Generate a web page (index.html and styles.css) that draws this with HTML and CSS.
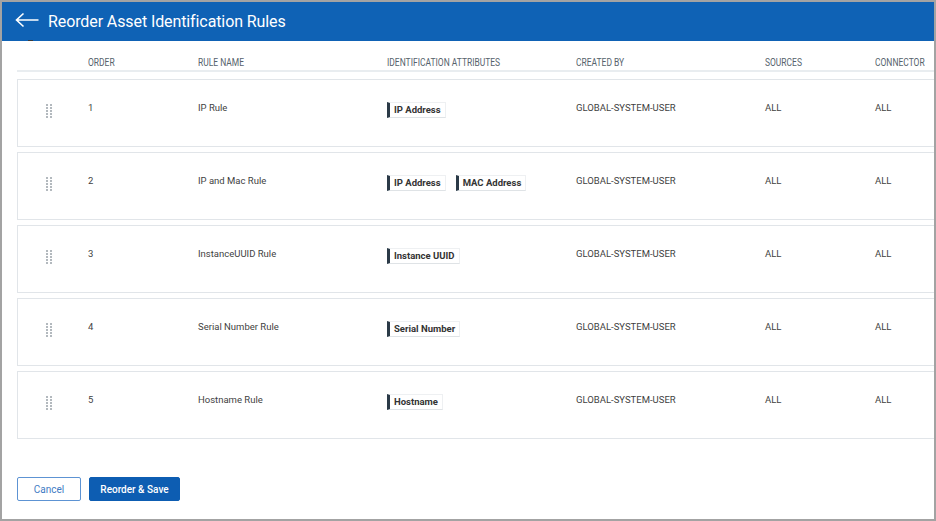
FILE: index.html
```html
<!DOCTYPE html>
<html>
<head>
<meta charset="utf-8">
<link rel="stylesheet" href="styles.css">
</head>
<body>
<div class="frame">
  <header class="topbar">
    <button class="back" aria-label="Back">
      <svg width="24" height="16" viewBox="0 0 24 16"><path d="M1.5 8 H23.5 M8.5 1.5 L1.5 8 L8.5 14.5" fill="none" stroke="#fff" stroke-width="1.6"/></svg>
    </button>
    <h1 class="title">Reorder Asset Identification Rules</h1>
  </header>
  <main class="content">
    <div class="thead">
      <span></span><span class="th">Order</span><span class="th">Rule Name</span><span class="th">Identification Attributes</span><span class="th">Created By</span><span class="th">Sources</span><span class="th">Connector</span>
    </div>
    <div class="rows">
      <div class="row">
        <span class="handle"></span><span>1</span><span>IP Rule</span>
        <span class="tags"><span class="tag">IP Address</span></span>
        <span>GLOBAL-SYSTEM-USER</span><span>ALL</span><span>ALL</span>
      </div>
      <div class="row">
        <span class="handle"></span><span>2</span><span>IP and Mac Rule</span>
        <span class="tags"><span class="tag">IP Address</span><span class="tag">MAC Address</span></span>
        <span>GLOBAL-SYSTEM-USER</span><span>ALL</span><span>ALL</span>
      </div>
      <div class="row">
        <span class="handle"></span><span>3</span><span>InstanceUUID Rule</span>
        <span class="tags"><span class="tag">Instance UUID</span></span>
        <span>GLOBAL-SYSTEM-USER</span><span>ALL</span><span>ALL</span>
      </div>
      <div class="row">
        <span class="handle"></span><span>4</span><span>Serial Number Rule</span>
        <span class="tags"><span class="tag">Serial Number</span></span>
        <span>GLOBAL-SYSTEM-USER</span><span>ALL</span><span>ALL</span>
      </div>
      <div class="row">
        <span class="handle"></span><span>5</span><span>Hostname Rule</span>
        <span class="tags"><span class="tag">Hostname</span></span>
        <span>GLOBAL-SYSTEM-USER</span><span>ALL</span><span>ALL</span>
      </div>
    </div>
    <div class="actions">
      <button class="btn btn-secondary">Cancel</button>
      <button class="btn btn-primary">Reorder &amp; Save</button>
    </div>
  </main>
</div>
</body>
</html>
```
FILE: styles.css
```css
* { box-sizing: border-box; }
html, body { margin: 0; padding: 0; }
body {
  width: 936px;
  height: 521px;
  background: #a3a3a3;
  padding: 2px 2px 2px 2px;
  font-family: Roboto, "Liberation Sans", sans-serif;
  overflow: hidden;
}
.frame {
  width: 932px;
  height: 517px;
  background: #fff;
  display: flex;
  flex-direction: column;
  overflow: hidden;
}
.topbar {
  height: 39px;
  background: #0f62b5;
  display: flex;
  align-items: center;
  padding-left: 13px;
  flex: none;
}
.back {
  position: relative;
  background: none;
  border: 0;
  padding: 0;
  width: 24px;
  height: 16px;
  margin-top: -3px;
  display: flex;
  cursor: pointer;
}
.back::after {
  content: "";
  position: absolute;
  left: 13px;
  top: 28px;
  width: 5px;
  height: 1px;
  background: #3a3a3a;
}
.title {
  margin: 0 0 0 9px;
  color: #fff;
  font-size: 16px;
  font-weight: 400;
  letter-spacing: -0.1px;
}
.content {
  flex: 1;
  padding: 0 0 0 15px;
  display: flex;
  flex-direction: column;
  overflow: hidden;
}
.thead, .row {
  display: grid;
  grid-template-columns: 71px 110px 189px 189px 189px 110px 140px;
  width: 1020px;
}
.row {
  grid-template-columns: 70px 110px 189px 189px 189px 110px 140px;
}
.thead {
  height: 31px;
  padding-top: 16px;
  border-bottom: 2px solid #e9edf0;
  font-size: 11px;
  text-transform: uppercase;
  color: #56626c;
  line-height: 12px;
}
.th {
  display: block;
  white-space: nowrap;
  transform: scaleX(0.77);
  transform-origin: left center;
}
.rows {
  margin-top: 7px;
  display: flex;
  flex-direction: column;
  gap: 5px;
}
.row {
  height: 68px;
  border: 1px solid #e1e5e9;
  padding-top: 22px;
  align-items: start;
  font-size: 9.5px;
  line-height: 12px;
  color: #3f3f3f;
}
.handle {
  margin-left: 28px;
  margin-top: 2px;
  width: 6px;
  height: 15px;
  background-image: radial-gradient(circle at 1px 1px, #b3b9be 1px, transparent 1.1px);
  background-size: 4px 3px;
}
.tags {
  display: flex;
  gap: 10px;
}
.tag {
  display: inline-flex;
  align-items: center;
  height: 16px;
  padding: 0 4px 0 4px;
  border: 1px solid #eef0f2;
  border-left: 3px solid #2b3a47;
  border-bottom-color: #dfe3e6;
  font-weight: 700;
  font-size: 9.5px;
  color: #333;
}
.actions {
  display: flex;
  gap: 8px;
  margin-top: 38px;
}
.btn {
  height: 24px;
  font-family: Roboto, "Liberation Sans", sans-serif;
  font-size: 10px;
  border-radius: 2px;
  cursor: pointer;
}
.btn-secondary {
  width: 64px;
  background: #fff;
  border: 1px solid #5d93d3;
  color: #3f7bc4;
}
.btn-primary {
  width: 91px;
  background: #0d5db2;
  border: 1px solid #0d5db2;
  color: #fff;
  font-weight: 500;
}
```
